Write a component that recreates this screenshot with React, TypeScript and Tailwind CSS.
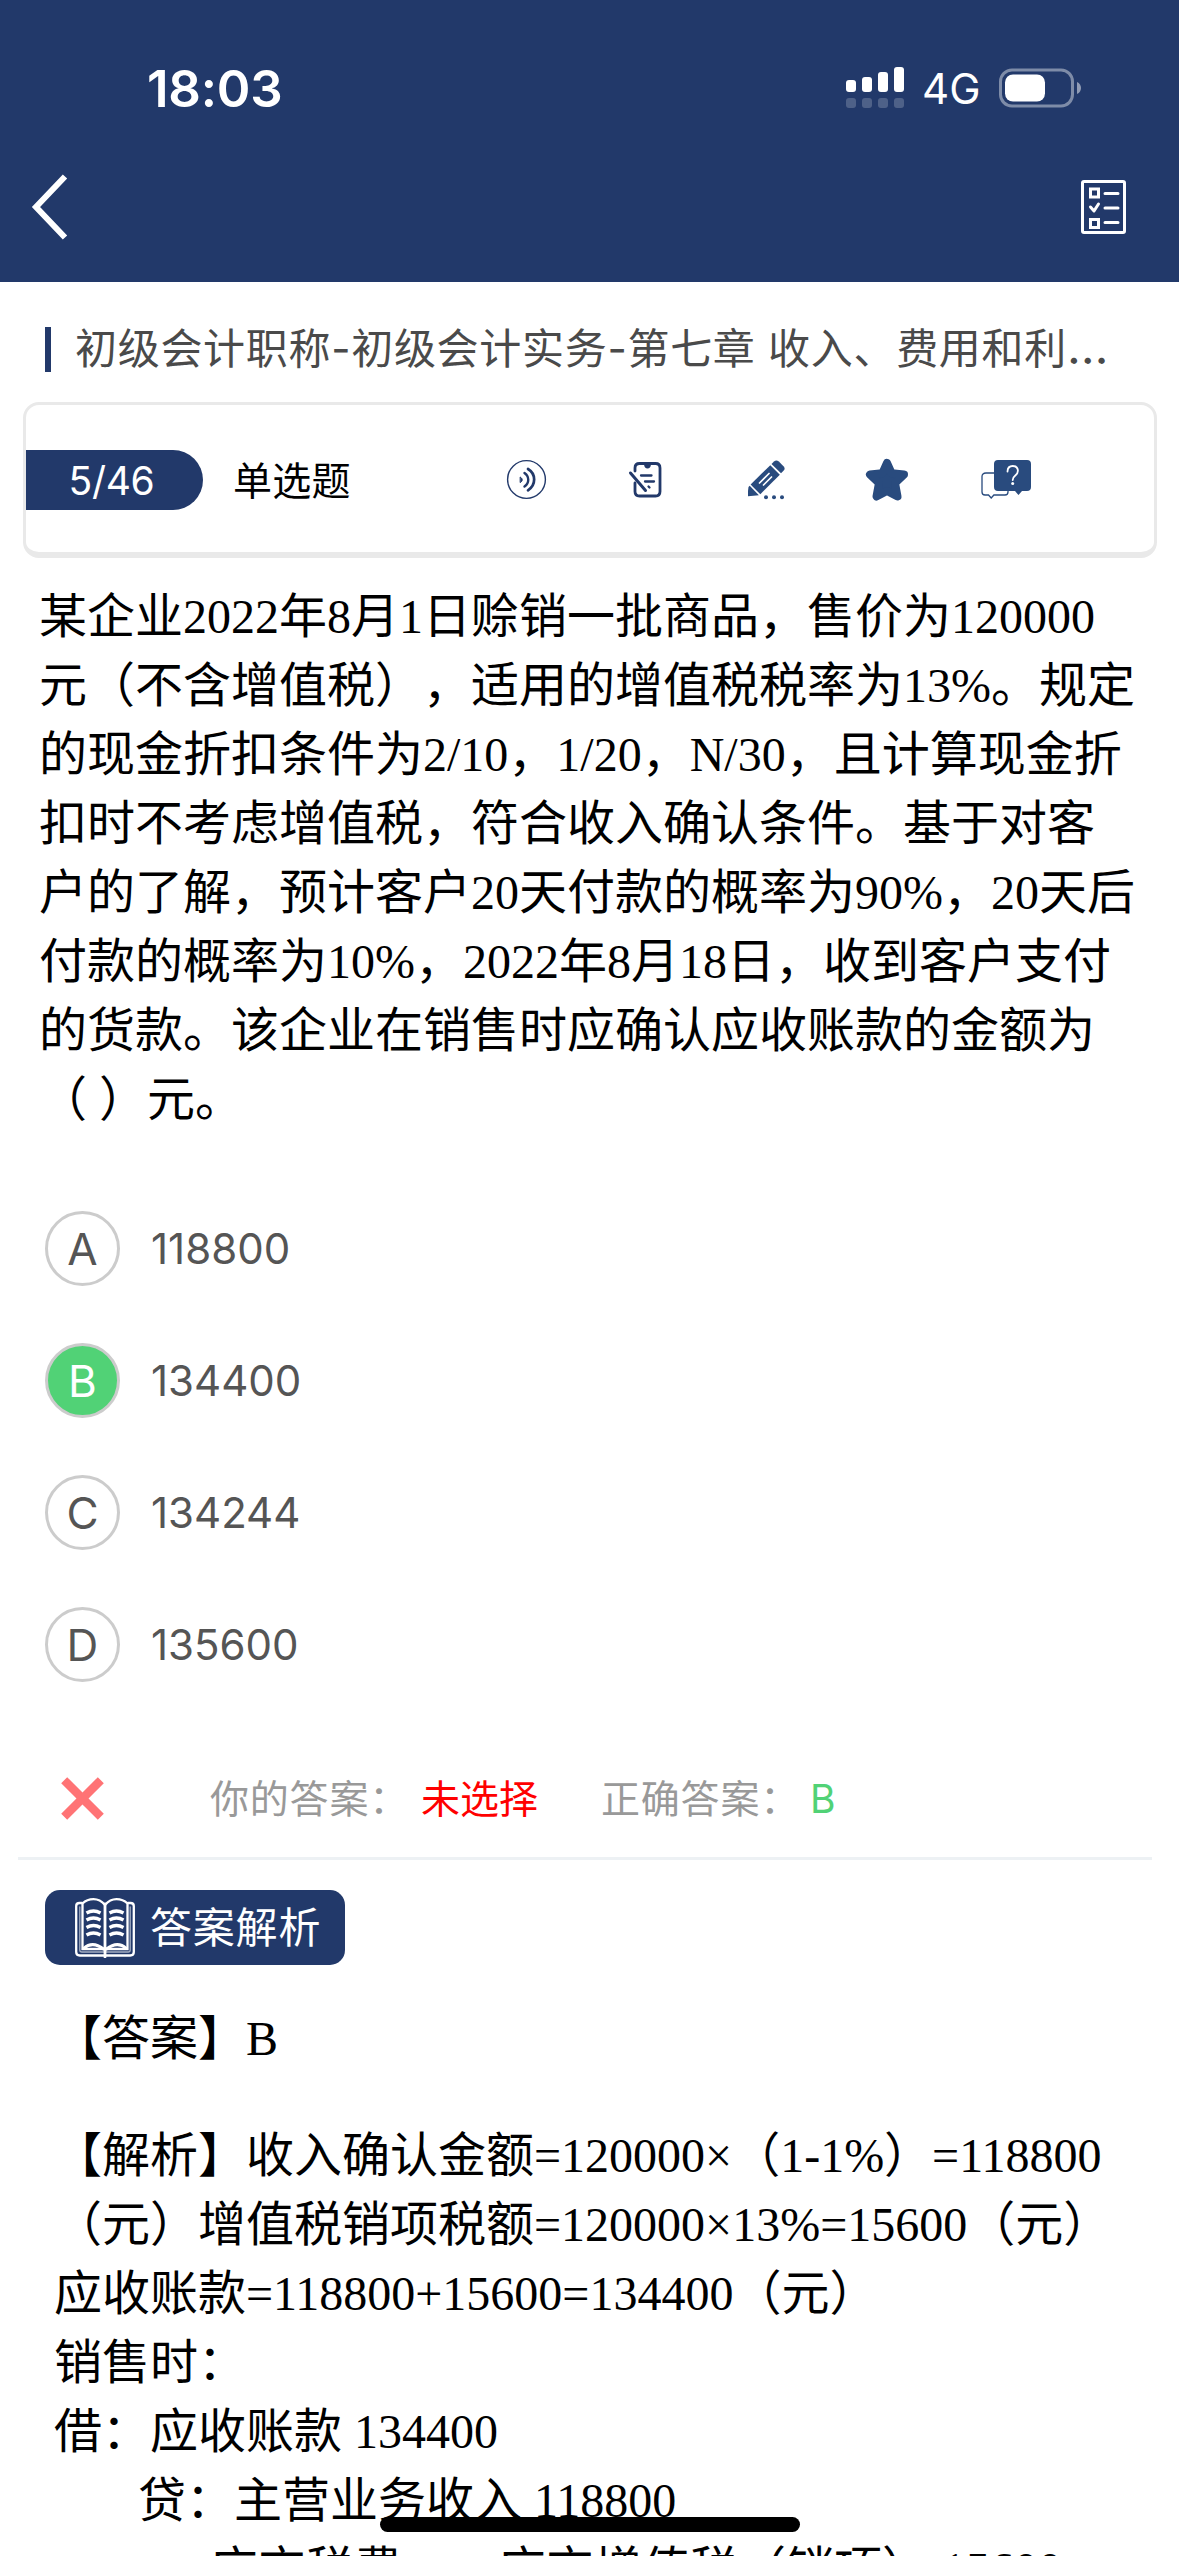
import React from 'react';

interface Option {
  key: string;
  text: string;
}

const OPTIONS: Option[] = [
  { key: 'A', text: '118800' },
  { key: 'B', text: '134400' },
  { key: 'C', text: '134244' },
  { key: 'D', text: '135600' },
];

const CORRECT = 'B';

const QUESTION_LINES = [
  '某企业2022年8月1日赊销一批商品，售价为120000',
  '元（不含增值税），适用的增值税税率为13%。规定',
  '的现金折扣条件为2/10，1/20，N/30，且计算现金折',
  '扣时不考虑增值税，符合收入确认条件。基于对客',
  '户的了解，预计客户20天付款的概率为90%，20天后',
  '付款的概率为10%，2022年8月18日，收到客户支付',
  '的货款。该企业在销售时应确认应收账款的金额为',
  '（ ）元。',
];

function StatusBar() {
  return (
    <div className="flex h-[132px] items-center justify-between pl-[147px] pr-[98px] pt-[44px] text-white">
      <span className="text-[51px] font-semibold leading-none tracking-[-0.200px]">18:03</span>
      <div className="flex items-center">
        <svg width="60" height="44" viewBox="0 0 60 44" fill="#fff">
          <rect x="1" y="14" width="10" height="12" rx="3" />
          <rect x="17" y="11" width="10" height="15" rx="3" />
          <rect x="33" y="6" width="10" height="20" rx="3" />
          <rect x="49" y="1" width="10" height="25" rx="3" />
          <g opacity="0.2">
            <rect x="1" y="32" width="10" height="10" rx="3" />
            <rect x="17" y="32" width="10" height="10" rx="3" />
            <rect x="33" y="32" width="10" height="10" rx="3" />
            <rect x="49" y="32" width="10" height="10" rx="3" />
          </g>
        </svg>
        <span className="ml-[17px] w-[77px] pt-[2px] text-[42px] leading-none">4G</span>
        <svg width="82" height="40" viewBox="0 0 82 40">
          <rect x="1.5" y="2" width="72" height="36" rx="11.5" fill="none" stroke="#fff" strokeOpacity="0.42" strokeWidth="3" />
          <rect x="6" y="6.5" width="40" height="27" rx="8" fill="#fff" />
          <path d="M78 14c2.700 1.200 4 3.500 4 6s-1.300 4.800-4 6z" fill="#fff" fillOpacity="0.5" />
        </svg>
      </div>
    </div>
  );
}

function NavBar() {
  return (
    <div className="flex h-[150px] items-center justify-between pl-[30px] pr-[52px]">
      <svg width="40" height="68" viewBox="0 0 40 68" fill="none" stroke="#fff" strokeWidth="6">
        <path d="M35 3.500 6 34l29 30.500" />
      </svg>
      <svg width="47" height="56" viewBox="0 0 47 56" fill="none" stroke="#fff" strokeWidth="3">
        <rect x="2.500" y="2.500" width="42" height="51" rx="1.500" />
        <rect x="10.500" y="10" width="8" height="8" />
        <rect x="10.500" y="40.500" width="8" height="8" />
        <path d="m10.500 28 3.500 4 4.500-7" strokeLinecap="round" strokeLinejoin="round" />
        <path d="M25 14.500h13M25 29h13M25 43.500h13" strokeLinecap="round" />
      </svg>
    </div>
  );
}

function SoundIcon() {
  return (
    <svg width="60" height="60" viewBox="0 0 60 60" fill="none" stroke="#22396a" strokeLinecap="round">
      <circle cx="30.500" cy="29.500" r="18.900" strokeWidth="1.400" />
      <path d="M32 19c8.200 5 8.200 16 0 21.300" strokeWidth="2.700" />
      <path d="M28.500 23c5 3.500 5 10 0 13.500" strokeWidth="2.400" />
      <path d="M24.500 27.200c2.400 1.500 2.400 3.800 0 5.200z" fill="#22396a" strokeWidth="1" />
    </svg>
  );
}

function NoteIcon() {
  return (
    <svg width="60" height="60" viewBox="0 0 60 60" fill="none" stroke="#22396a" strokeLinecap="round">
      <path d="M19 21v-3q0-4.500 4.500-4.500h16q4.500 0 4.500 4.500v23.500q0 4.500-4.500 4.500h-16q-4.500 0-4.500-4.500V33" strokeWidth="2.800" />
      <path d="M28 14.500h7q-.500 4-3.500 4t-3.500-4z" fill="#22396a" stroke="none" />
      <path d="M25 25.500h10.500M29 31.500h9M32.500 36.500l1 1" strokeWidth="2.300" />
      <path d="m14.500 23 15 17.500" strokeWidth="3" />
    </svg>
  );
}

function PencilIcon() {
  return (
    <svg width="60" height="60" viewBox="0 0 60 60" fill="#294b7e">
      <path d="M35.500 14 38 11.500q2.300-2.200 4.800 0l4.700 4.700q2.300 2.300 0 4.600L45 23.300z" />
      <path d="m34.300 15.200 9.500 9.500-19.500 19.500-9.700-9.700z" />
      <path d="m13.700 35.700 9.200 9.600-10.900 1q-.300-5.300.500-9.300z" />
      <path d="m23.500 33 9.500-9.500M27.500 35l8-8" stroke="#fff" strokeWidth="1.700" strokeLinecap="round" />
      <circle cx="30" cy="47.200" r="2" />
      <circle cx="38" cy="47.200" r="2" />
      <circle cx="46" cy="47.200" r="2" />
    </svg>
  );
}

function StarIcon() {
  return (
    <svg width="60" height="60" viewBox="0 0 60 60" fill="#294b7e" stroke="#294b7e" strokeWidth="8" strokeLinejoin="round">
      <path d="m31 13 4.700 10.300 12.300 1.200-9 8.500 2.500 13.500L31 41l-10.500 5.500L23 33l-9-8.500 12.300-1.200z" />
    </svg>
  );
}

function ChatIcon() {
  return (
    <svg width="60" height="60" viewBox="0 0 60 60">
      <path
        d="M18 23h-8q-4 0-4 3.500v15.500q0 3 3 3h3.500l2.700 3 2.700-3H29q3 0 3-3v-3"
        fill="none"
        stroke="#294b7e"
        strokeWidth="1.300"
      />
      <path d="M22 10h29q4 0 4 4v23q0 4-4 4h-5l-3.500 4-3.500-4H22q-4 0-4-4V14q0-4 4-4z" fill="#294b7e" />
      <path d="M31.500 21.500q.200-5.500 5.200-5.500t5.200 4.800q0 2.700-2.600 4.700-2.600 2.100-2.600 4.500" fill="none" stroke="#fff" strokeWidth="1.800" strokeLinecap="round" />
      <circle cx="36.700" cy="33.500" r="1.500" fill="#fff" />
    </svg>
  );
}

function BookIcon() {
  return (
    <svg width="60" height="60" viewBox="0 0 60 60" fill="none" stroke="#fff" strokeLinecap="round">
      <path d="M7 5H4.500Q1.200 5 1.200 8v46q0 3.500 3.500 3.500h50.600q3.500 0 3.500-3.500V8q0-3-3.300-3H53" strokeWidth="2.300" />
      <path d="M4.800 9v43q0 2 2 2h46.400q2 0 2-2V9" strokeWidth="1.300" opacity="0.6" />
      <path d="M30 7Q25 1.200 18.500 1.200T7.500 5.500V51H29M30 7q5-5.800 11.500-5.800t11 4.300V51H31" strokeWidth="2.300" />
      <path d="M30 6v53" strokeWidth="2.800" />
      <path d="M8.500 50.500q9-8 20 .5M51.500 50.500q-9-8-20 .5" strokeWidth="3" />
      <g strokeWidth="3.300" strokeLinecap="butt">
        <path d="M11.500 15q7-4 14 0M11.500 22q7-4 14 0M11.500 29.500q7-4 14 0M11.500 37q7-4 14 0" />
        <path d="M34.500 15q7-4 14 0M34.500 22q7-4 14 0M34.500 29.500q7-4 14 0M34.500 37q7-4 14 0" />
      </g>
    </svg>
  );
}

function ToolSlot({ children }: { children: React.ReactNode }) {
  return <div className="flex w-[120px] justify-center">{children}</div>;
}

function QuestionToolbar() {
  return (
    <div className="ml-[23px] mt-[30px] flex h-[156px] w-[1134px] items-center rounded-[16px] border-[3px] border-b-[6px] border-[#e9e9e9] bg-white pt-[3px]">
      <div className="flex h-[60px] w-[177px] items-center justify-center rounded-r-full bg-[#22396a] pr-[6px] text-[39px] leading-none tracking-[-0.300px] text-white">
        5/46
      </div>
      <span className="ml-[30px] text-[39px] leading-none tracking-[0.300px] text-black">单选题</span>
      <div className="ml-[115px] flex">
        <ToolSlot><SoundIcon /></ToolSlot>
        <ToolSlot><NoteIcon /></ToolSlot>
        <ToolSlot><PencilIcon /></ToolSlot>
        <ToolSlot><StarIcon /></ToolSlot>
        <ToolSlot><ChatIcon /></ToolSlot>
      </div>
    </div>
  );
}

function OptionRow({ option, correct }: { option: Option; correct: boolean }) {
  return (
    <div className="flex h-[75px] items-center">
      <div
        className={
          correct
            ? 'flex size-[75px] items-center justify-center rounded-full border-[3px] border-[#ccc] bg-[#51d276] text-[44px] leading-none text-white'
            : 'flex size-[75px] items-center justify-center rounded-full border-[3px] border-[#ccc] text-[44px] leading-none text-[#555]'
        }
      >
        {option.key}
      </div>
      <span className="ml-[31px] text-[42px] leading-none text-[#555]">{option.text}</span>
    </div>
  );
}

function AnswerSummary() {
  return (
    <div className="ml-[18px] mt-[58px] flex h-[120px] w-[1134px] items-center border-b-[3px] border-[#edf1f4] text-[39px] leading-none text-[#999]">
      <svg className="ml-[43px]" width="43" height="43" viewBox="0 0 43 43" stroke="#ff7375" strokeWidth="8.500">
        <path d="m3.200 3.200 36.600 36.600M39.800 3.200 3.200 39.800" />
      </svg>
      <span className="ml-[106px] w-[211px] tracking-[0.800px]">你的答案：</span>
      <span className="w-[180px] text-[#f00]">未选择</span>
      <span className="w-[209px] tracking-[0.800px]">正确答案：</span>
      <span className="text-[#51d276]">B</span>
    </div>
  );
}

function Analysis() {
  return (
    <div className="ml-[54px] whitespace-nowrap font-['Liberation_Serif','Noto_Sans_CJK_SC',serif] text-[48px] leading-[69px] text-black">
      <p className="mt-[39px]">【答案】B</p>
      <div className="mt-[48px]">
        <p>【解析】收入确认金额=120000×（1-1%）=118800</p>
        <p>（元）增值税销项税额=120000×13%=15600（元）</p>
        <p>应收账款=118800+15600=134400（元）</p>
        <p>销售时：</p>
        <p>借：应收账款 134400</p>
        <p className="pl-[84px]">贷：主营业务收入 118800</p>
        <p className="pl-[156px]">应交税费——应交增值税（销项） 15600</p>
      </div>
    </div>
  );
}

export default function App() {
  return (
    <div className="relative h-[2556px] w-[1179px] overflow-hidden bg-white font-['Inter','Noto_Sans_CJK_SC',sans-serif] [text-spacing-trim:space-all]" lang="zh-CN">
      <header className="h-[282px] bg-[#22396a]">
        <StatusBar />
        <NavBar />
      </header>

      <div className="ml-[45px] mt-[45px] flex h-[45px] items-center whitespace-nowrap">
        <div className="h-[45px] w-[6px] bg-[#22396a]" />
        <h1 className="ml-[24px] pb-[5px] text-[42px] leading-none tracking-[0.700px] text-[#4a4a4a]">
          初级会计职称-初级会计实务-第七章 收入、费用和利<span className="text-[48px] leading-none">…</span>
        </h1>
      </div>

      <QuestionToolbar />

      <div className="ml-[39px] mt-[24px] whitespace-nowrap font-['Liberation_Serif','Noto_Sans_CJK_SC',serif] text-[48px] leading-[69px] text-black">
        {QUESTION_LINES.map((line) => (
          <p key={line}>{line}</p>
        ))}
      </div>

      <div className="ml-[45px] mt-[77px] flex flex-col gap-[57px]">
        {OPTIONS.map((option) => (
          <OptionRow key={option.key} option={option} correct={option.key === CORRECT} />
        ))}
      </div>

      <AnswerSummary />

      <div className="ml-[45px] mt-[30px] flex h-[75px] w-[300px] items-center rounded-[15px] bg-[#22396a] pl-[30px] text-white">
        <BookIcon />
        <span className="ml-[15px] text-[42px] leading-none tracking-[0.800px]">答案解析</span>
      </div>

      <Analysis />

      {/* home indicator */}
      <div className="absolute left-[380px] top-[2517px] h-[15px] w-[420px] rounded-full bg-black" />
    </div>
  );
}
